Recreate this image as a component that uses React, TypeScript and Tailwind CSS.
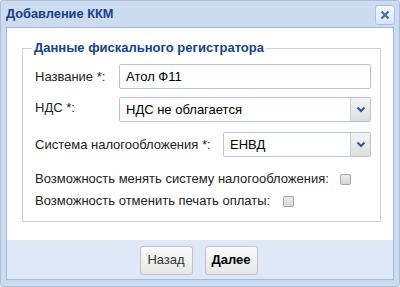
import React from "react";

const font = { fontFamily: '"Liberation Sans", Arial, sans-serif' };

function Chevron() {
  return (
    <svg width="10" height="7" viewBox="0 0 10 7">
      <path d="M1.5 1.5 L5 5 L8.5 1.5" fill="none" stroke="#2c5a93" strokeWidth="2" />
    </svg>
  );
}

function Select({ value, className }: { value: string; className: string }) {
  return (
    <div className={`flex h-[25px] border border-[#b5c3d4] rounded-[2px] bg-white ${className}`}>
      <div className="flex-1 flex items-center pl-[6px] text-[13px] text-black">{value}</div>
      <div className="w-[20px] flex items-center justify-center border-l border-[#c7ccd6] bg-gradient-to-b from-[#f4f4f4] to-[#dedede]">
        <Chevron />
      </div>
    </div>
  );
}

function Checkbox() {
  return <div className="w-[11px] h-[11px] rounded-[2px] border border-[#a4a4a4] bg-gradient-to-b from-[#ececec] to-[#d6d6d6]" />;
}

export default function App() {
  return (
    <div style={font} className="w-[400px] h-[287px] bg-[#cddbee] border border-[#a9bfdc] rounded-[3px] flex flex-col px-[5px] pb-[6px]">
      <div className="h-[26px] flex items-center justify-between">
        <span className="text-[12.8px] font-bold text-[#15428b] pl-0">Добавление ККМ</span>
        <div className="w-[20px] h-[20px] mr-[-1px] mt-[2px] rounded-[3px] border border-[#a9c0de] bg-gradient-to-b from-[#f4f8fd] to-[#d9e5f4] flex items-center justify-center">
          <svg width="10" height="10" viewBox="0 0 10 10">
            <path d="M1.5 1.5 L8.5 8.5 M8.5 1.5 L1.5 8.5" stroke="#4a6e9e" strokeWidth="2.2" />
          </svg>
        </div>
      </div>
      <div className="flex-1 flex flex-col border border-[#99bbe8] bg-white">
        <div className="h-[212px] pt-[12px] px-[15px]">
          <fieldset className="border border-[#d0d0d0] h-[182px] pl-[12px] pr-[9px] pt-[3px]">
            <legend className="ml-[-3px] px-[2px] text-[13px] font-bold text-[#15428b] leading-[16px]">
              Данные фискального регистратора
            </legend>
            <div className="text-[13px] text-[#222] flex flex-col">
              <div className="flex items-center h-[25px] mt-[5px]">
                <span className="w-[84px]">Название *:</span>
                <div className="flex-1 h-[25px] border border-[#b5c3d4] rounded-[2px] flex items-center pl-[6px] text-black">Атол Ф11</div>
              </div>
              <div className="flex items-start h-[25px] mt-[8px]">
                <span className="w-[84px] pt-[1px]">НДС *:</span>
                <Select value="НДС не облагается" className="flex-1" />
              </div>
              <div className="flex items-center h-[25px] mt-[10px]">
                <span className="w-[188px]">Система налогообложения *:</span>
                <Select value="ЕНВД" className="w-[148px]" />
              </div>
              <div className="flex items-center h-[16px] mt-[14px]">
                <span className="w-[305px]">Возможность менять систему налогообложения:</span>
                <Checkbox />
              </div>
              <div className="flex items-center h-[16px] mt-[6px]">
                <span className="w-[248px]">Возможность отменить печать оплаты:</span>
                <Checkbox />
              </div>
            </div>
          </fieldset>
        </div>
        <div className="flex-1 bg-[#dfe8f6] flex items-center justify-center gap-[12px] pt-[1px] pr-[3px]">
          <button className="h-[29px] w-[53px] rounded-[3px] border border-[#c2c2c2] bg-gradient-to-b from-[#fbfbfb] to-[#e6e6e6] text-[13px] text-[#333]">Назад</button>
          <button className="h-[29px] w-[53px] rounded-[3px] border border-[#c2c2c2] bg-gradient-to-b from-[#fbfbfb] to-[#e6e6e6] text-[13px] font-bold text-black">Далее</button>
        </div>
      </div>
    </div>
  );
}
